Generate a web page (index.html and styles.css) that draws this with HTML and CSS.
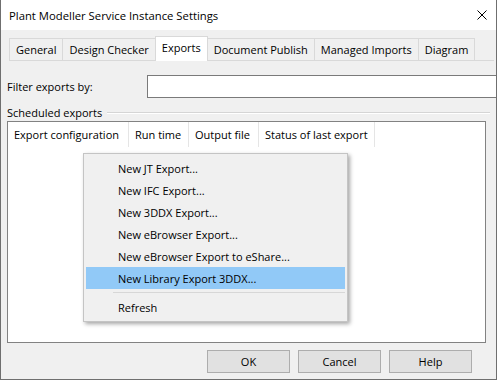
FILE: index.html
```html
<!DOCTYPE html>
<html lang="en">
<head>
    <meta charset="UTF-8">
    <title>Plant Modeller Service Instance Settings</title>
    <link rel="stylesheet" href="styles.css">
</head>
<body>
    <div class="window">
        <!-- Pasek tytułu -->
        <div class="titlebar">
            <span class="title">Plant Modeller Service Instance Settings</span>
            <svg class="close" width="10" height="10" viewBox="0 0 10 10">
                <path d="M0.5 0.5 L9.5 9.5 M9.5 0.5 L0.5 9.5" stroke="#000" stroke-width="1" fill="none"/>
            </svg>
        </div>

        <!-- Zakładki -->
        <div class="tabstrip">
            <div class="tab">General</div>
            <div class="tab">Design Checker</div>
            <div class="tab active">Exports</div>
            <div class="tab">Document Publish</div>
            <div class="tab">Managed Imports</div>
            <div class="tab">Diagram</div>
        </div>

        <div class="panel">
            <div class="filter-row">
                <label for="filter">Filter exports by:</label>
                <input type="text" id="filter" class="filter-input">
            </div>

            <div class="group-title">
                <span>Scheduled exports</span>
                <span class="group-line"></span>
            </div>

            <div class="listbox">
                <div class="list-header">
                    <div class="col col-config">Export configuration</div>
                    <div class="col col-time">Run time</div>
                    <div class="col col-file">Output file</div>
                    <div class="col col-status">Status of last export</div>
                </div>
            </div>
        </div>

        <div class="buttons">
            <button class="btn">OK</button>
            <button class="btn">Cancel</button>
            <button class="btn">Help</button>
        </div>

        <!-- Menu kontekstowe -->
        <div class="menu">
            <div class="menu-item">New JT Export...</div>
            <div class="menu-item">New IFC Export...</div>
            <div class="menu-item">New 3DDX Export...</div>
            <div class="menu-item">New eBrowser Export...</div>
            <div class="menu-item">New eBrowser Export to eShare...</div>
            <div class="menu-item hover">New Library Export 3DDX...</div>
            <div class="menu-separator"></div>
            <div class="menu-item">Refresh</div>
        </div>
    </div>
</body>
</html>
```

FILE: styles.css
```css
body {
    margin: 0;
    font-family: "Open Sans", "Noto Sans", sans-serif;
    font-size: 11px;
    color: #000;
    background: #fff;
}
.window {
    position: relative;
    width: 497px;
    height: 380px;
    box-sizing: border-box;
    border: 1px solid #6f6f6f;
    border-top: none;
    background: #f0f0f0;
    overflow: hidden;
}
.titlebar {
    height: 30px;
    background: #fff;
    display: flex;
    align-items: center;
    justify-content: space-between;
    padding: 0 9px 0 8px;
}
.title {
    font-size: 11.3px;
}
.tabstrip {
    display: flex;
    align-items: flex-end;
    height: 22px;
    margin: 8px 2px 0 8px;
    border-bottom: 1px solid #d9d9d9;
}
.tab {
    height: 22px;
    box-sizing: border-box;
    padding: 0 6px;
    border: 1px solid #d9d9d9;
    border-bottom: none;
    margin-right: -1px;
    display: flex;
    align-items: center;
    background: #f0f0f0;
}
.tab.active {
    height: 25px;
    margin-bottom: -1px;
    padding-bottom: 3px;
    background: #fff;
    position: relative;
    z-index: 1;
}
.panel {
    padding-left: 6px;
}
.filter-row {
    display: flex;
    align-items: center;
    margin-top: 14px;
}
.filter-row label {
    width: 140px;
}
.filter-input {
    flex: 1;
    height: 23px;
    box-sizing: border-box;
    border: 1px solid #7a7a7a;
    margin: 0 -12px 0 0;
    background: #fff;
}
.group-title {
    display: flex;
    align-items: center;
    gap: 5px;
    height: 14px;
    margin: 7px 6px 0 0;
}
.group-line {
    flex: 1;
    height: 1px;
    margin-top: 2px;
    background: #d5d5d5;
    border-bottom: 1px solid #fff;
}
.listbox {
    height: 222px;
    box-sizing: border-box;
    margin: 2px 10px 0 0;
    border: 1px solid #828282;
    background: #fff;
}
.list-header {
    display: flex;
    height: 25px;
}
.col {
    box-sizing: border-box;
    padding: 0 6px;
    border-right: 1px solid #e5e5e5;
    display: flex;
    align-items: center;
    white-space: nowrap;
}
.col-config { width: 121px; }
.col-time { width: 60px; }
.col-file { width: 70px; }
.col-status { width: 116px; }
.buttons {
    display: flex;
    justify-content: flex-end;
    gap: 8px;
    margin: 7px 24px 0 0;
}
.btn {
    width: 83px;
    height: 23px;
    font: inherit;
    color: #000;
    background: #e1e1e1;
    border: 1px solid #adadad;
    padding: 0;
}
.menu {
    position: absolute;
    left: 82px;
    top: 153px;
    width: 265px;
    box-sizing: border-box;
    padding: 3px 2px;
    background: #f0f0f0;
    border: 1px solid #c4c4c4;
    box-shadow: 2px 2px 4px rgba(0, 0, 0, 0.35);
    z-index: 5;
}
.menu-item {
    height: 22px;
    padding-left: 32px;
    display: flex;
    align-items: center;
}
.menu-item.hover {
    background: #91c9f7;
}
.menu-separator {
    height: 1px;
    margin: 3px 0 3px 27px;
    background: #d7d7d7;
}
```
